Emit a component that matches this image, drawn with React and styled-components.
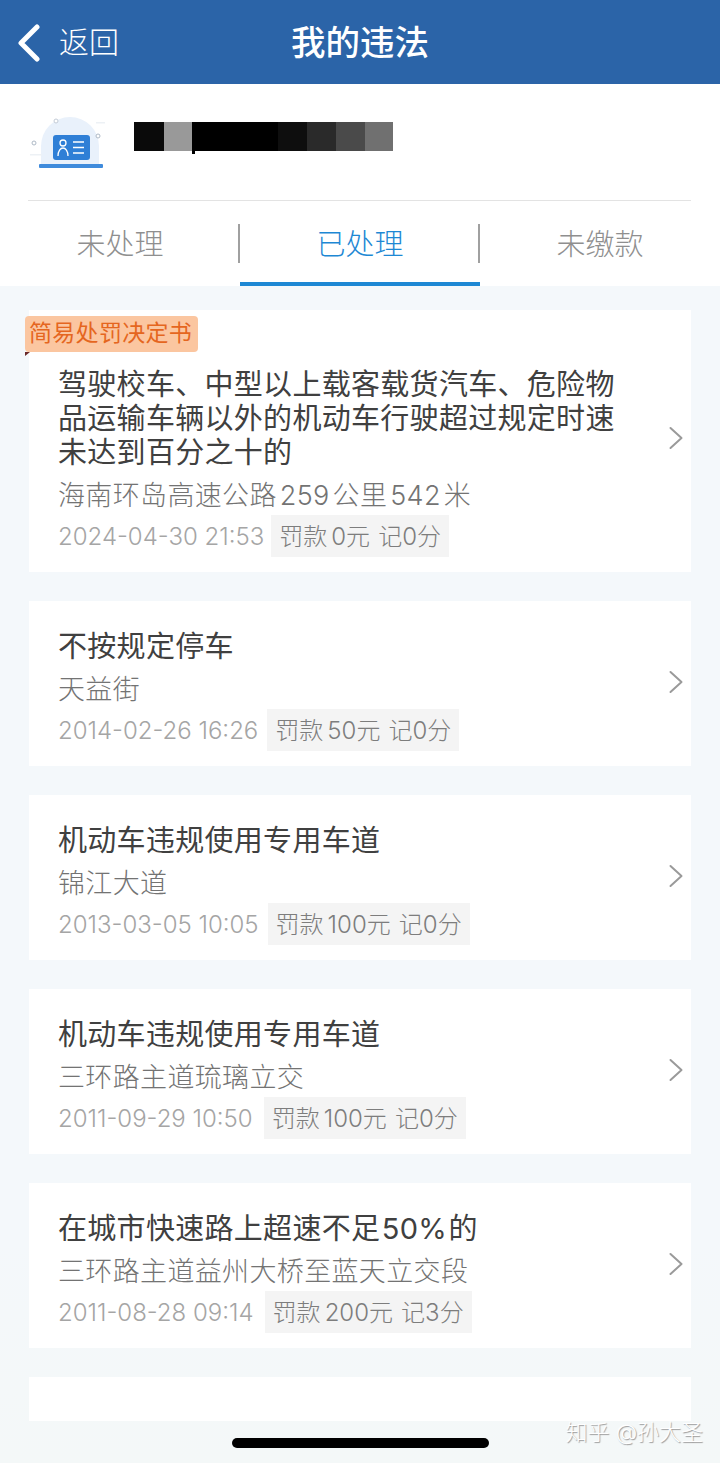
import React from "react";
import styled, { createGlobalStyle } from "styled-components";

const Global = createGlobalStyle`
  html, body { margin: 0; padding: 0; background: #f4f8fb; }
  body { font-family: Inter, "Noto Sans CJK SC", "Noto Sans", sans-serif; }
  * { box-sizing: border-box; }
`;

const Page = styled.div`
  position: relative;
  width: 720px;
  height: 1463px;
  overflow: hidden;
  background: linear-gradient(#f4f8fb 85%, #f4f8f8);
`;

const Header = styled.header`
  position: relative;
  height: 84px;
  background: #2b64a8;
  display: flex;
  align-items: center;
  justify-content: center;
  color: #fff;
`;

const Back = styled.div`
  position: absolute;
  left: 17px;
  top: 24px;
  display: flex;
  align-items: center;
  gap: 18px;
  font-size: 30px;
  line-height: 37px;
  font-weight: 300;
`;

const BackLabel = styled.span`
  margin-top: -2px;
`;

const Title = styled.h1`
  margin: 2px 0 0;
  font-size: 34.5px;
  line-height: 44px;
  font-weight: 500;
`;

const Profile = styled.section`
  background: #fff;
  padding: 0 29px 0 28px;
`;

const Plate = styled.div`
  height: 117px;
  display: flex;
  align-items: flex-start;
  gap: 29px;
  padding-top: 30px;
  border-bottom: 1.5px solid #e3e3e3;
`;

const Mosaic = styled.div`
  position: relative;
  display: flex;
  margin-top: 8px;
  height: 29px;
`;

const Tile = styled.span`
  display: block;
  width: ${(p) => p.$w}px;
  background: ${(p) => p.$c};
`;

const Nib = styled.span`
  position: absolute;
  left: 58px;
  top: 29px;
  width: 3px;
  height: 3px;
  background: #000;
`;

const Tabs = styled.nav`
  display: grid;
  grid-template-columns: repeat(3, 240px);
  height: 85px;
  background: #fff;
`;

const Tab = styled.div`
  position: relative;
  display: flex;
  justify-content: center;
  padding-top: 23px;
  font-size: 29px;
  line-height: 42px;
  font-weight: 300;
  color: ${(p) => (p.$active ? "#1e88d4" : "#8f8f8f")};
  border-bottom: 4px solid ${(p) => (p.$active ? "#1e88d4" : "transparent")};
  &::after {
    content: "";
    display: ${(p) => (p.$last ? "none" : "block")};
    position: absolute;
    right: 0;
    top: 23px;
    width: 2px;
    height: 39px;
    background: #a0a0a0;
  }
`;

const List = styled.main`
  display: flex;
  flex-direction: column;
  gap: 29px;
  padding: 24px 29px 0 29px;
`;

const Card = styled.article`
  position: relative;
  background: #fff;
  min-height: ${(p) => (p.$stub ? "43px" : "auto")};
  padding: ${(p) => (p.$first ? "58px" : "29px")} 76px 15px 29px;
`;

const Badge = styled.div`
  position: absolute;
  left: -4px;
  top: 6px;
  height: 36px;
  padding: 0 6px 0 4px;
  border-radius: 4px;
  background: #fbc6a0;
  color: #e5661f;
  font-size: 23px;
  line-height: 34px;
  font-weight: 400;
  letter-spacing: 0.3px;
  white-space: nowrap;
  &::after {
    content: "";
    position: absolute;
    left: 0;
    bottom: -4px;
    border-top: 4px solid #6b2a2a;
    border-right: 5px solid transparent;
  }
`;

const Name = styled.h2`
  margin: 0;
  font-size: 29px;
  line-height: 34px;
  font-weight: 400;
  color: #404040;
  letter-spacing: 0.3px;
  word-spacing: -7px;
`;

const Road = styled.div`
  margin-top: 6px;
  font-size: 27px;
  line-height: 40px;
  font-weight: 300;
  color: #737373;
  letter-spacing: 0.35px;
  word-spacing: -5px;
  white-space: nowrap;
`;

const Meta = styled.div`
  display: flex;
  align-items: center;
  gap: ${(p) => p.$gap}px;
  height: 42px;
  margin-top: -1px;
`;

const When = styled.span`
  margin-top: 1px;
  font-size: 24px;
  font-weight: 300;
  color: #a5a5a5;
  white-space: nowrap;
`;

const Fine = styled.span`
  height: 42px;
  padding: 0 8px 3px;
  display: flex;
  align-items: center;
  background: #f4f4f4;
  color: #7d7d7d;
  font-size: 24px;
  font-weight: 300;
  word-spacing: -2.7px;
  white-space: pre;
`;

const Arrow = styled.svg`
  position: absolute;
  right: 7px;
  top: ${(p) => p.$top}px;
  width: 16px;
  height: 24px;
`;

const HomeBar = styled.div`
  position: absolute;
  left: 232px;
  top: 1438px;
  width: 257px;
  height: 10px;
  border-radius: 5px;
  background: #000;
`;

const Mark = styled.div`
  position: absolute;
  right: 17px;
  top: 1417px;
  font-size: 22px;
  line-height: 30px;
  font-weight: 300;
  color: #fff;
  text-shadow: 1px 1px 1px #9a9a9a;
  white-space: nowrap;
`;

const Chevron = ({ top }) => (
  <Arrow $top={top} viewBox="0 0 16 24" fill="none">
    <path d="M2.5 2 L13.5 12 L2.5 22" stroke="#9a9a9a" strokeWidth="2" strokeLinecap="round" strokeLinejoin="round" />
  </Arrow>
);

const LicenceIcon = () => (
  <svg width="77" height="56" viewBox="0 0 77 56" fill="none" style={{ flex: "none" }}>
    <path d="M13 50 V32 a29 29 0 0 1 58 0 V50 Z" fill="#e9f1fb" />
    <circle cx="28" cy="7" r="2" fill="#fff" stroke="#c3cbd6" />
    <circle cx="70" cy="22" r="2" fill="#fff" stroke="#aeb9c6" />
    <circle cx="6" cy="29" r="2" fill="#fff" stroke="#aeb9c6" />
    <rect x="2" y="40" width="12" height="1.5" fill="#edf1f5" />
    <rect x="68" y="8" width="9" height="1.5" fill="#edf1f5" />
    <rect x="25" y="21" width="37" height="25" rx="3" fill="#2f7fd6" />
    <circle cx="35" cy="29" r="3" stroke="#fff" strokeWidth="1.3" />
    <path d="M30 42 c0 -5 2.5 -8 5 -8 s5 3 5 8" stroke="#fff" strokeWidth="1.3" />
    <path d="M45 28 h11 M45 33.5 h11 M45 39 h11" stroke="#fff" strokeWidth="1.5" />
    <rect x="11" y="50" width="64" height="4" rx="1" fill="#3f8bdc" />
  </svg>
);

const tiles = [
  [30, "#0a0a0a"], [28, "#999999"], [86, "#000000"], [29, "#0e0e0e"],
  [29, "#2a2a2a"], [29, "#4a4a4a"], [28, "#707070"],
];

const records = [
  { name: "不按规定停车", road: "天益街", when: "2014-02-26 16:26", fine: "罚款 50元  记0分", gap: 9 },
  { name: "机动车违规使用专用车道", road: "锦江大道", when: "2013-03-05 10:05", fine: "罚款 100元  记0分", gap: 9 },
  { name: "机动车违规使用专用车道", road: "三环路主道琉璃立交", when: "2011-09-29 10:50", fine: "罚款 100元  记0分", gap: 11 },
  { name: "在城市快速路上超速不足 50% 的", road: "三环路主道益州大桥至蓝天立交段", when: "2011-08-28 09:14", fine: "罚款 200元  记3分", gap: 11 },
];

export default function App() {
  return (
    <Page>
      <Global />
      <Header>
        <Back>
          <svg width="24" height="38" viewBox="0 0 24 38" fill="none">
            <path d="M20 3 L4 19 L20 35" stroke="#fff" strokeWidth="5" strokeLinecap="round" strokeLinejoin="round" />
          </svg>
          <BackLabel>返回</BackLabel>
        </Back>
        <Title>我的违法</Title>
      </Header>
      <Profile>
        <Plate>
          <LicenceIcon />
          <Mosaic>
            {tiles.map(([w, c], i) => (
              <Tile key={i} $w={w} $c={c} />
            ))}
            <Nib />
          </Mosaic>
        </Plate>
      </Profile>
      <Tabs>
        <Tab>未处理</Tab>
        <Tab $active>已处理</Tab>
        <Tab $last>未缴款</Tab>
      </Tabs>
      <List>
        <Card $first>
          <Badge>简易处罚决定书</Badge>
          <Name>驾驶校车、中型以上载客载货汽车、危险物品运输车辆以外的机动车行驶超过规定时速未达到百分之十的</Name>
          <Road>海南环岛高速公路 259 公里 542 米</Road>
          <Meta $gap={7}>
            <When>2024-04-30 21:53</When>
            <Fine>罚款 0元  记0分</Fine>
          </Meta>
          <Chevron top={116} />
        </Card>
        {records.map((r) => (
          <Card key={r.when}>
            <Name>{r.name}</Name>
            <Road>{r.road}</Road>
            <Meta $gap={r.gap}>
              <When>{r.when}</When>
              <Fine>{r.fine}</Fine>
            </Meta>
            <Chevron top={69} />
          </Card>
        ))}
        <Card $stub />
      </List>
      <Mark>知乎 @孙大圣</Mark>
      <HomeBar />
    </Page>
  );
}
